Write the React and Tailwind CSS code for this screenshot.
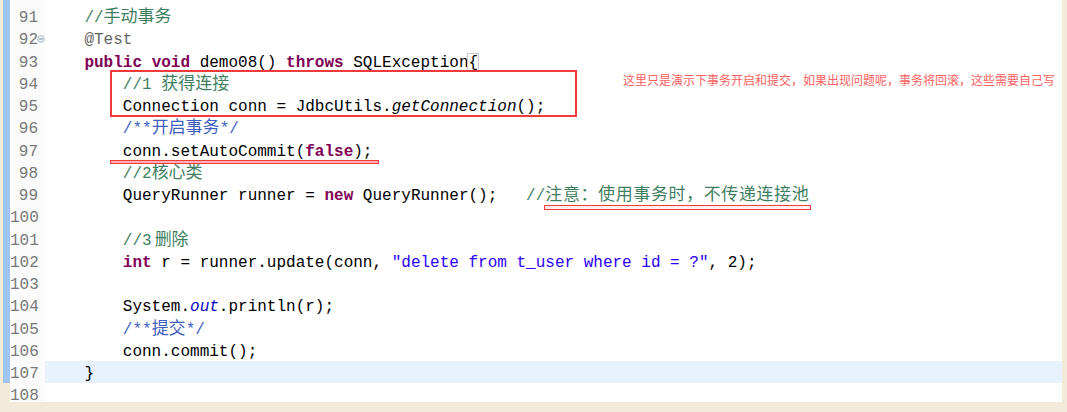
import React from "react";

const K = "text-[#7f0055] font-bold";
const C = "text-[#3f7f5f]";
const D = "text-[#3f5fbf]";
const S = "text-[#2a00ff]";
const A = "text-[#646464]";
const CJK = "text-[17px]";

const lines = [
  { n: 90, segs: [] },
  { n: 91, segs: [["    //", C], ["手动事务", `${C} ${CJK}`]] },
  { n: 92, segs: [["    @Test", A]], fold: true },
  {
    n: 93,
    segs: [
      ["    "],
      ["public", K],
      [" "],
      ["void", K],
      [" demo08() "],
      ["throws", K],
      [" SQLException"],
      ["{", "outline outline-1 outline-[#c8c8c8]"],
    ],
  },
  { n: 94, segs: [["        //1 ", C], ["获得连接", `${C} ${CJK}`]] },
  {
    n: 95,
    segs: [
      ["        Connection conn = JdbcUtils."],
      ["getConnection", "italic"],
      ["();"],
    ],
  },
  { n: 96, segs: [["        /**", D], ["开启事务", `${D} ${CJK}`], ["*/", D]] },
  { n: 97, segs: [["        conn.setAutoCommit("], ["false", K], [");"]] },
  { n: 98, segs: [["        //2", C], ["核心类", `${C} ${CJK}`]] },
  {
    n: 99,
    segs: [
      ["        QueryRunner runner = "],
      ["new", K],
      [" QueryRunner();   "],
      ["//", C],
      ["注意：使用事务时，不传递连接池", `${C} text-[17px] tracking-[0.6px]`],
    ],
  },
  { n: 100, segs: [] },
  { n: 101, segs: [["        //3", C], ["删除", `${C} ${CJK} pl-[3px]`]] },
  {
    n: 102,
    segs: [
      ["        "],
      ["int", K],
      [" r = runner.update(conn, "],
      ['"delete from t_user where id = ?"', S],
      [", 2);"],
    ],
  },
  { n: 103, segs: [] },
  {
    n: 104,
    segs: [
      ["        System."],
      ["out", "italic text-[#0000c0]"],
      [".println(r);"],
    ],
  },
  { n: 105, segs: [["        /**", D], ["提交", `${D} ${CJK}`], ["*/", D]] },
  { n: 106, segs: [["        conn.commit();"]] },
  { n: 107, segs: [["    }"]], current: true },
  { n: 108, segs: [], last: true },
];

function FoldIcon() {
  return (
    <svg width="8" height="8" viewBox="0 0 8 8" className="absolute right-[0px] top-[8px]">
      <circle cx="4" cy="4" r="3.3" fill="#eef2f7" stroke="#9aa8bb" strokeWidth="0.8" />
      <line x1="2.2" y1="4" x2="5.8" y2="4" stroke="#6f7f95" strokeWidth="0.9" />
    </svg>
  );
}

function Row({ line }) {
  return (
    <div className="flex h-[22.25px] leading-[22.25px]">
      <div className={line.last ? "w-[7px]" : "w-[7px] bg-[#9ec5f2]"} />
      <div className="relative w-[35px] bg-[#fbfbfb] pt-[2px] pr-[7px] text-right text-[#787878]">
        {line.n}
        {line.fold && <FoldIcon />}
      </div>
      <div
        className={
          line.current
            ? "flex-1 whitespace-pre bg-[#e8f2fe] pt-[2px] pl-[1px] text-black"
            : "flex-1 whitespace-pre bg-white pt-[2px] pl-[1px] text-black"
        }
      >
        {line.segs.map(([t, cls], i) => (
          <span key={i} className={cls}>
            {t}
          </span>
        ))}
      </div>
    </div>
  );
}

export default function App() {
  return (
    <div className="relative h-[412px] w-[1067px] overflow-hidden bg-[#f3ebd9] pl-[3px] pr-[5px] pb-[10px]">
      <div className="h-[402px] overflow-hidden font-['Liberation_Mono','Noto_Sans_CJK_SC',monospace] text-[16px]">
        <div className="-mt-[17.25px]">
          {lines.map((l) => (
            <Row key={l.n} line={l} />
          ))}
        </div>
      </div>

      {/* annotations drawn on top of the screenshot */}
      <div className="absolute left-[110px] top-[70px] h-[47px] w-[467px] border-2 border-[#f2393c]" />
      <div className="absolute left-[110px] top-[160px] h-[4px] w-[269px] border border-[#f2393c] bg-[#ffb0b0]" />
      <div className="absolute left-[544px] top-[205px] h-[5px] w-[267px] border border-[#f2393c] bg-[#fff0f0]" />
      <div className="absolute left-[623px] top-[72px] whitespace-nowrap font-['Noto_Sans_CJK_SC',sans-serif] text-[12px] leading-[16px] text-[#ff6060]">
        这里只是演示下事务开启和提交，如果出现问题呢，事务将回滚，这些需要自己写
      </div>
    </div>
  );
}
